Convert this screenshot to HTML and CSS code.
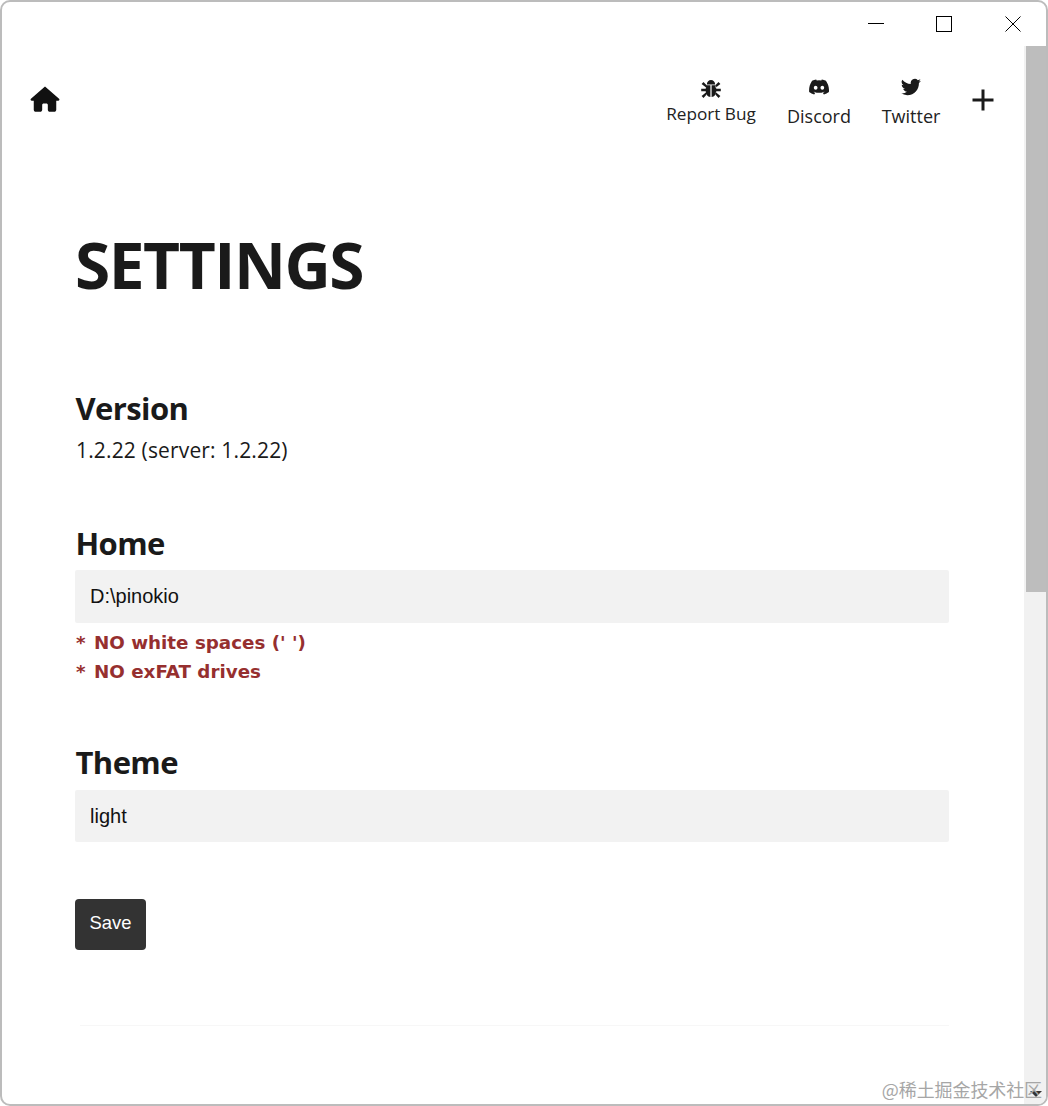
FILE: index.html
```html
<!DOCTYPE html>
<html lang="en">
<head>
<meta charset="utf-8">
<title>Settings</title>
<link rel="stylesheet" href="styles.css">
</head>
<body>
<div class="window">
  <div class="titlebar">
    <svg class="win-btn win-min" viewBox="0 0 16 16"><path d="M0 8.500H16" /></svg>
    <svg class="win-btn win-max" viewBox="0 0 16 16"><rect x=".5" y=".5" width="15" height="15"/></svg>
    <svg class="win-btn win-close" viewBox="0 0 16 16"><path d="M.5.500L15.500 15.500M15.500.500L.5 15.500"/></svg>
  </div>
  <div class="body-row">
    <div class="page">
      <nav class="nav">
        <svg class="home" viewBox="0 0 32 28"><path d="M16 .6 L31 13.600c.9.9.3 2.200-.9 2.200H28v9.700c0 1.300-1 2.200-2.200 2.200h-4.600c-1.200 0-2.200-.9-2.200-2.200v-5.200c0-.9-.7-1.500-1.500-1.500h-3c-.8 0-1.500.6-1.500 1.500v5.200c0 1.300-1 2.200-2.200 2.200H6.200C5 27.700 4 26.800 4 25.500v-9.700H1.900c-1.200 0-1.800-1.300-.9-2.200z"/></svg>
        <div class="nav-links">
          <a class="nav-item nav-bug">
            <svg class="nav-icon" viewBox="0 0 20 20"><path d="M5.800 5.400C6 2.700 7.800 1 10 1s4 1.700 4.200 4.400zM5.400 6.200h4v11.900C6.500 17.800 4.800 15.400 4.800 12.800V7.300c0-.4.200-.8.600-1.100zM10.600 6.200h4c.4.300.6.700.6 1.100v5.500c0 2.600-1.700 5-4.600 5.300zM.6 5 2.500 3.100l2.900 3v2.700zM19.400 5 17.500 3.100l-2.900 3v2.700zM.2 9.700h4.800v2.600H.2zM15 9.700h4.800v2.600H15zM5.200 13.300v2.700l-2.700 3-1.900-1.900zM14.800 13.300v2.700l2.700 3 1.900-1.900z"/></svg>
            <span>Report Bug</span>
          </a>
          <a class="nav-item nav-discord">
            <svg class="nav-icon" viewBox="0 0 24 24"><path d="M20.300 4.400A19.800 19.800 0 0 0 15.400 2.900c-.2.400-.5.900-.6 1.300a18.300 18.300 0 0 0-5.500 0 12.600 12.600 0 0 0-.7-1.300 19.700 19.700 0 0 0-4.900 1.500C.6 9-.2 13.600.2 18.100a19.900 19.900 0 0 0 6 3c.5-.7.9-1.400 1.300-2.100-.7-.3-1.400-.6-2-1l.5-.4a14.200 14.200 0 0 0 12.100 0l.5.400c-.6.400-1.300.7-2 1 .4.700.8 1.400 1.300 2.100a19.900 19.900 0 0 0 6-3c.5-5.200-.8-9.700-3.600-13.700zM8 15.400c-1.200 0-2.200-1.100-2.200-2.400S6.800 10.600 8 10.600s2.200 1.100 2.200 2.400-1 2.400-2.200 2.400zm8 0c-1.200 0-2.200-1.100-2.200-2.400s1-2.400 2.200-2.400 2.200 1.100 2.200 2.400-1 2.400-2.200 2.400z"/></svg>
            <span>Discord</span>
          </a>
          <a class="nav-item nav-twitter">
            <svg class="nav-icon" viewBox="0 0 24 24"><path d="M23.900 4.600a9.800 9.800 0 0 1-2.800.8 4.900 4.900 0 0 0 2.200-2.700 9.900 9.900 0 0 1-3.100 1.200 4.900 4.900 0 0 0-8.400 4.500A14 14 0 0 1 1.600 3.200a4.900 4.900 0 0 0 1.500 6.600 4.900 4.900 0 0 1-2.200-.6c0 2.300 1.600 4.400 3.900 4.900a4.900 4.900 0 0 1-2.200.1 4.900 4.900 0 0 0 4.600 3.400A9.900 9.900 0 0 1 0 19.600a14 14 0 0 0 7.500 2.200c9.100 0 14.300-7.700 14-14.600a10 10 0 0 0 2.400-2.600z"/></svg>
            <span>Twitter</span>
          </a>
          <svg class="plus" viewBox="0 0 24 24"><path d="M12 1.500V22.500M1.500 12H22.500"/></svg>
        </div>
      </nav>
      <main class="content">
        <h1 class="title">SETTINGS</h1>
        <section class="group group-version">
          <h2 class="label">Version</h2>
          <p class="version">1.2.22 (server: 1.2.22)</p>
        </section>
        <section class="group group-home">
          <h2 class="label">Home</h2>
          <div class="field">D:\pinokio</div>
          <p class="warn warn-first"><span class="star">*</span>NO white spaces (' ')</p>
          <p class="warn"><span class="star">*</span>NO exFAT drives</p>
        </section>
        <section class="group group-theme">
          <h2 class="label">Theme</h2>
          <div class="field field-theme">light</div>
        </section>
        <button class="save">Save</button>
        <hr class="rule">
      </main>
    </div>
    <div class="scrollbar">
      <div class="thumb"></div>
      <div class="track"></div>
      <div class="arrow"></div>
    </div>
  </div>
  <div class="watermark">@稀土掘金技术社区</div>
</div>
</body>
</html>
```
FILE: styles.css
```css
* { box-sizing: border-box; }
html, body { margin: 0; padding: 0; background: #fff; }
body { width: 1048px; height: 1106px; overflow: hidden; }
.window {
  position: relative;
  width: 1048px;
  height: 1106px;
  border: 2px solid #bcbcbc;
  border-radius: 10px;
  overflow: hidden;
  background: #fff;
  display: flex;
  flex-direction: column;
  font-family: "Open Sans", "Noto Sans", sans-serif;
  color: #1a1a1a;
}
.titlebar { height: 44px; flex: none; position: relative; }
.win-btn { position: absolute; fill: none; stroke: #000; stroke-width: 1; }
.win-min { left: 866px; top: 13px; width: 16px; height: 16px; }
.win-max { left: 934px; top: 14px; width: 16px; height: 16px; }
.win-close { left: 1003px; top: 14px; width: 16px; height: 16px; }

.body-row { flex: 1; display: flex; min-height: 0; }
.page { flex: 1; min-width: 0; }
.scrollbar { width: 22px; flex: none; display: flex; flex-direction: column; background: #f1f1f1; position: relative; }
.thumb { height: 546px; margin-left: 2px; background: #bdbdbd; }
.track { flex: 1; }
.arrow {
  position: absolute; left: 6px; bottom: 7px;
  width: 0; height: 0;
  border-left: 6px solid transparent; border-right: 6px solid transparent;
  border-top: 6px solid #333;
}

.nav { display: flex; justify-content: space-between; align-items: flex-start; padding: 38px 0 0 28px; height: 175px; }
.home { width: 30px; height: 28px; fill: #111; margin-top: 1px; }
.nav-links { display: flex; align-items: flex-start; }
.nav-item { display: flex; flex-direction: column; align-items: center; font-size: 18px; line-height: 24px; color: #222; }
.nav-icon { width: 20px; height: 20px; fill: #1a1a1a; display: block; }
.nav-bug { font-size: 17.200px; width: 92px; margin-right: 29px; margin-top: -5px; margin-left: 1px; }
.nav-bug span { margin-top: 3px; }
.nav-discord { width: 66px; margin-right: 29px; margin-top: -7px; }
.nav-twitter { width: 60px; margin-top: -7px; margin-right: 30px; }
.nav-discord span, .nav-twitter span { margin-top: 7px; }
.plus { width: 24px; height: 24px; fill: none; stroke: #1a1a1a; stroke-width: 3; margin-top: 4px; margin-right: 29px; }

.content { width: 874px; margin-left: 73px; }
.title { margin: 0; font-size: 64px; line-height: 87px; font-weight: 700; letter-spacing: -1.500px; }
.group { margin: 0; }
.group-version { margin-top: 79px; }
.group-home { margin-top: 52px; }
.group-theme { margin-top: 55px; }
.label { margin: 0; font-size: 31px; line-height: 42px; font-weight: 700; letter-spacing: -.6px; padding-left: .5px; }
.version { margin: 1px 0 0; font-size: 21px; line-height: 40px; letter-spacing: .15px; padding-left: 1px; }
.field {
  height: 53px; margin-top: 6px; padding: 0 15px;
  background: #f2f2f2; border-radius: 2px;
  font: 20px/53px "Liberation Sans", Arial, sans-serif; color: #111;
}
.field-theme { height: 52px; line-height: 52px; margin-top: 7px; }
.warn { margin: 0; padding-left: 1px; font: 700 18.300px/29px "DejaVu Sans", sans-serif; color: #962f2f; }
.warn-first { margin-top: 5px; }
.star { display: inline-block; width: 18px; }
.save {
  display: block; margin: 57px 0 0; width: 71px; height: 51px; border: 0; border-radius: 4px;
  background: #333; color: #fff; font: 18.400px "Liberation Sans", Arial, sans-serif; padding: 0 0 3px;
}
.rule { margin: 75px 0 0 5px; border: 0; border-top: 1px solid #f7f7f7; height: 0; }
.watermark {
  position: absolute; right: 4px; bottom: 3px;
  font: 18px/24px "Noto Sans CJK SC", sans-serif; color: #a6a6a6;
  letter-spacing: -.1px;
}
```
